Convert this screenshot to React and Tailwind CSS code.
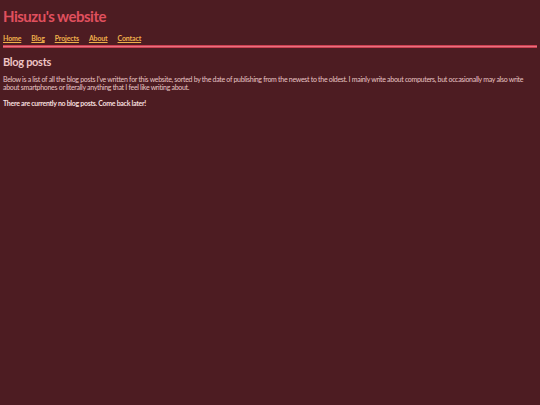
export default function App() {
  const links = ["Home", "Blog", "Projects", "About", "Contact"];
  return (
    <div
      className="min-h-[405px] bg-[#4d1c22] px-[3px] pt-[6px] text-[#e8c4c4]"
      style={{ fontFamily: "Lato, 'Noto Sans', sans-serif" }}
    >
      <h1 className="text-[15px] font-bold leading-[20px] tracking-[-0.5px] text-[#e0505e]">Hisuzu's website</h1>
      <nav className="mt-[7px] flex gap-[10px] text-[7px] font-bold leading-[10px] tracking-[-0.15px]">
        {links.map((l) => (
          <a key={l} href="#" className="text-[#f0b04c] underline">
            {l}
          </a>
        ))}
      </nav>
      <div className="mt-[2px] h-[3px] border-y border-[#c94050] bg-[#e87080]" />
      <h2 className="mt-[7px] text-[11px] font-bold leading-[14px] tracking-[-0.3px] text-[#efc4c4]">Blog posts</h2>
      <p className="mt-[6px] text-[7px] leading-[8px] tracking-[-0.3px]">
        Below is a list of all the blog posts I've written for this website, sorted by the date of publishing from the newest to the oldest. I mainly write about computers, but occasionally may also write about smartphones or literally anything that I feel like writing about.
      </p>
      <p className="mt-[8px] text-[7px] font-bold leading-[8px] tracking-[-0.3px] text-[#f4dede]">
        There are currently no blog posts. Come back later!
      </p>
    </div>
  );
}
